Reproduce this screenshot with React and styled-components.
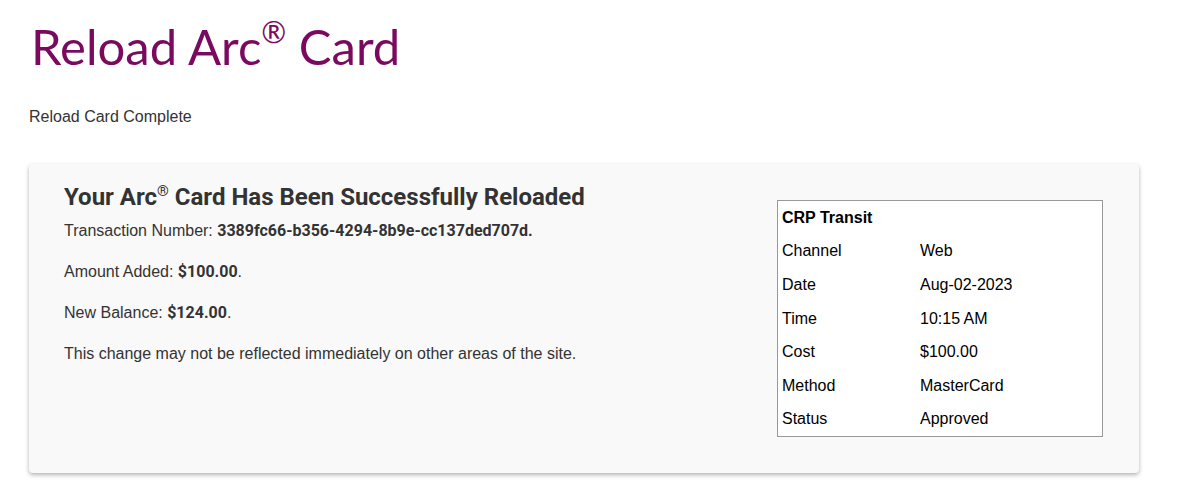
import React from "react";
import styled, { createGlobalStyle } from "styled-components";

const GlobalStyle = createGlobalStyle`
  body {
    margin: 0;
    background: #fff;
    font-family: "Liberation Sans", Arial, sans-serif;
    color: #333;
  }
`;

const Page = styled.div`
  padding: 14px 51px 20px 29px;
`;

const Title = styled.h1`
  margin: 0 0 0 2px;
  font-family: "Century Gothic", "Lato", sans-serif;
  font-weight: 400;
  font-size: 49px;
  line-height: 64px;
  color: #7a0a60;
  sup {
    font-size: 30px;
    line-height: 0;
    vertical-align: 22px;
  }
`;

const Crumb = styled.p`
  margin: 29px 0 0;
  font-size: 16px;
  line-height: 20px;
  color: #333;
`;

const Card = styled.section`
  margin-top: 37px;
  background: #f9f9f9;
  border-radius: 4px;
  box-shadow: 0 2px 4px rgba(0, 0, 0, 0.3);
  padding: 19px 36px 36px 35px;
  display: flex;
  justify-content: space-between;
  align-items: flex-start;
`;

const Details = styled.div``;

const Heading = styled.h2`
  margin: 0 0 10px;
  font-family: Roboto, "Liberation Sans", sans-serif;
  font-weight: 700;
  font-size: 24px;
  line-height: 28px;
  color: #333;
  sup {
    font-size: 15px;
    font-weight: 400;
    line-height: 0;
    vertical-align: 9px;
  }
`;

const Line = styled.p`
  margin: 0 0 21px;
  font-size: 16px;
  line-height: 20px;
  b {
    font-family: Roboto, "Liberation Sans", sans-serif;
    font-weight: 700;
  }
`;

const Receipt = styled.table`
  margin-top: 17px;
  width: 326px;
  border: 1px solid #999;
  background: #fff;
  border-collapse: collapse;
  font-size: 16px;
  color: #000;
  td,
  th {
    padding: 0 4px;
    height: 33.6px;
    text-align: left;
  }
  th {
    font-weight: 700;
  }
  td:first-child {
    width: 130px;
  }
`;

const rows = [
  ["Channel", "Web"],
  ["Date", "Aug-02-2023"],
  ["Time", "10:15 AM"],
  ["Cost", "$100.00"],
  ["Method", "MasterCard"],
  ["Status", "Approved"],
];

const App = () => {
  return (
    <>
      <GlobalStyle />
      <Page>
        <Title>
          Reload Arc<sup>®</sup> Card
        </Title>
        <Crumb>Reload Card Complete</Crumb>
        <Card>
          <Details>
            <Heading>
              Your Arc<sup>®</sup> Card Has Been Successfully Reloaded
            </Heading>
            <Line>
              Transaction Number: <b>3389fc66-b356-4294-8b9e-cc137ded707d.</b>
            </Line>
            <Line>
              Amount Added: <b>$100.00</b>.
            </Line>
            <Line>
              New Balance: <b>$124.00</b>.
            </Line>
            <Line>
              This change may not be reflected immediately on other areas of the
              site.
            </Line>
          </Details>
          <Receipt>
            <tbody>
              <tr>
                <th colSpan={2}>CRP Transit</th>
              </tr>
              {rows.map(([label, value]) => (
                <tr key={label}>
                  <td>{label}</td>
                  <td>{value}</td>
                </tr>
              ))}
            </tbody>
          </Receipt>
        </Card>
      </Page>
    </>
  );
};

export default App;
